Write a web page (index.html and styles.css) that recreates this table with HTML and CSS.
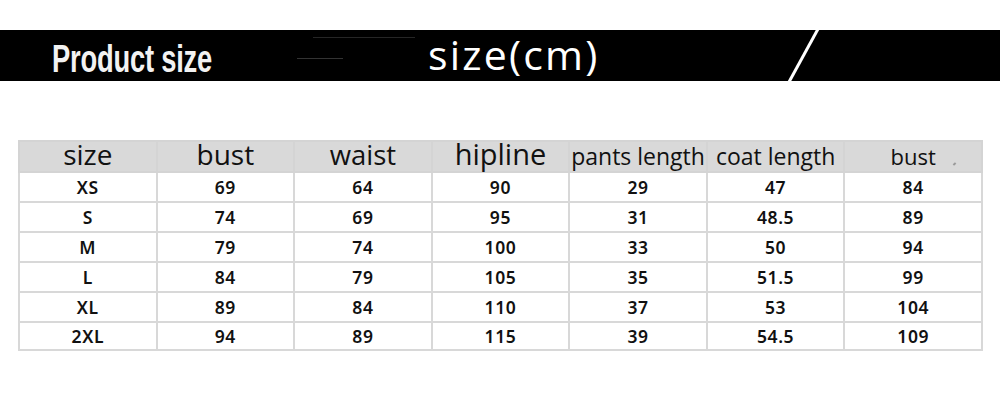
FILE: index.html
```html
<!DOCTYPE html>
<html>
<head>
<meta charset="utf-8">
<link rel="stylesheet" href="styles.css">
</head>
<body>
<div class="banner">
  <span class="title"><span class="title-inner">Product size</span></span>
  <span class="subtitle">size(cm)</span>
  <span class="ghost ghost-a"></span>
  <span class="ghost ghost-b"></span>
  <svg class="slash" width="40" height="52" viewBox="0 0 40 52"><line x1="31" y1="-1" x2="2" y2="52" stroke="#fff" stroke-width="3"/></svg>
</div>
<table class="sizes">
  <thead>
    <tr>
      <th class="h-lg">size</th>
      <th class="h-lg">bust</th>
      <th class="h-md">waist</th>
      <th class="h-xl">hipline</th>
      <th class="h-sm">pants length</th>
      <th class="h-sm">coat length</th>
      <th class="h-xs mark">bust</th>
    </tr>
  </thead>
  <tbody>
    <tr><td>XS</td><td>69</td><td>64</td><td>90</td><td>29</td><td>47</td><td>84</td></tr>
    <tr><td>S</td><td>74</td><td>69</td><td>95</td><td>31</td><td>48.5</td><td>89</td></tr>
    <tr><td>M</td><td>79</td><td>74</td><td>100</td><td>33</td><td>50</td><td>94</td></tr>
    <tr><td>L</td><td>84</td><td>79</td><td>105</td><td>35</td><td>51.5</td><td>99</td></tr>
    <tr><td>XL</td><td>89</td><td>84</td><td>110</td><td>37</td><td>53</td><td>104</td></tr>
    <tr class="last"><td>2XL</td><td>94</td><td>89</td><td>115</td><td>39</td><td>54.5</td><td>109</td></tr>
  </tbody>
</table>
</body>
</html>
```
FILE: styles.css
```css
html, body {
  margin: 0;
  padding: 0;
  background: #fff;
}
body {
  width: 1000px;
  height: 410px;
  overflow: hidden;
  font-family: "Open Sans", "Noto Sans", sans-serif;
}
.banner {
  position: relative;
  margin-top: 30px;
  height: 51px;
  background: #000;
  display: flex;
  align-items: flex-start;
}
.title {
  display: block;
  width: 160px;
  margin-left: 52px;
  margin-top: 7px;
  height: 44px;
  overflow: visible;
}
.title-inner {
  display: inline-block;
  font-family: "Liberation Sans", Arial, sans-serif;
  font-weight: 700;
  font-size: 38px;
  line-height: 44px;
  color: #f2f2f2;
  white-space: nowrap;
  letter-spacing: -0.3px;
  transform: scaleX(0.72);
  transform-origin: left center;
}
.subtitle {
  display: block;
  margin-left: 216px;
  margin-top: -4px;
  font-family: "Open Sans", sans-serif;
  font-size: 41px;
  line-height: 56px;
  letter-spacing: 2.2px;
  color: #fff;
  white-space: nowrap;
}
.ghost {
  position: absolute;
  height: 1px;
  background: #262626;
}
.ghost-a {
  left: 313px;
  top: 7px;
  width: 102px;
}
.ghost-b {
  left: 297px;
  top: 28px;
  width: 46px;
  background: #333;
}
.slash {
  position: absolute;
  left: 787px;
  top: 0;
}
.sizes {
  margin-top: 59px;
  margin-left: 18px;
  width: 965px;
  table-layout: fixed;
  border-collapse: collapse;
}
.sizes th, .sizes td {
  border: 2px solid #d8d8d8;
  padding: 0;
  text-align: center;
  white-space: nowrap;
  overflow: visible;
}
.sizes th {
  background: #d9d9d9;
  height: 29px;
  line-height: 24px;
  font-family: "Open Sans", sans-serif;
  font-weight: 400;
  color: #111;
  vertical-align: baseline;
  border-color: #d4d4d4;
}
.h-xl { font-size: 29px; }
.h-lg { font-size: 28px; }
.h-md { font-size: 27.5px; }
.h-sm { font-size: 23px; }
.h-xs { font-size: 22px; }
.mark { position: relative; }
.mark::after {
  content: "";
  position: absolute;
  left: 108px;
  top: 21px;
  width: 3px;
  height: 2px;
  background: #9a9a9a;
  transform: rotate(-40deg);
}
.sizes td {
  height: 28px;
  line-height: 28px;
  font-family: "Noto Sans", sans-serif;
  font-weight: 600;
  font-size: 17.5px;
  letter-spacing: 0.6px;
  color: #111;
  vertical-align: middle;
}
.sizes tr.last td {
  height: 26px;
  line-height: 26px;
}
```
